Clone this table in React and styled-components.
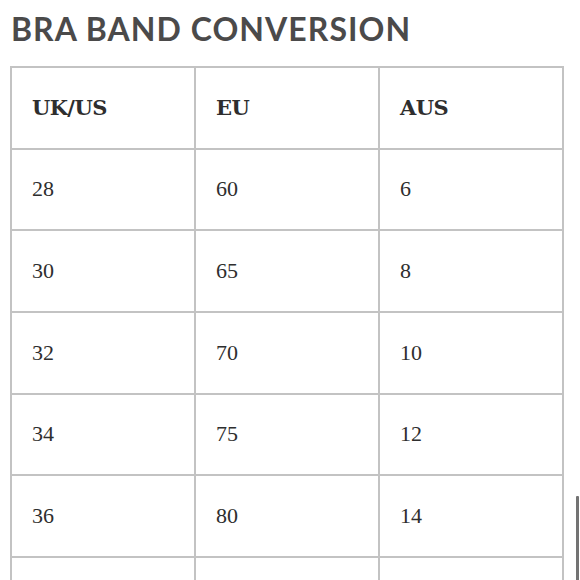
import styled, { createGlobalStyle } from "styled-components";

const GlobalStyle = createGlobalStyle`
  html, body {
    margin: 0;
    padding: 0;
    background: #fff;
    overflow: hidden;
  }
`

const Page = styled.div`
  width: 580px;
  height: 580px;
  overflow: hidden;
  position: relative;
  background: #fff;
`

const Title = styled.h1`
  margin: 0;
  padding: 9px 0 0 11px;
  height: 66px;
  box-sizing: border-box;
  font-family: "Lato", "Liberation Sans", sans-serif;
  font-weight: 700;
  font-size: 32px;
  line-height: 40px;
  letter-spacing: 1.05px;
  color: #4b4a4a;
`

const Table = styled.div`
  display: grid;
  grid-template-columns: repeat(3, 1fr);
  grid-auto-rows: 79.67px;
  gap: 2px;
  padding: 2px;
  margin-left: 10px;
  width: 554px;
  box-sizing: border-box;
  background: #c3c3c3;
`

const Cell = styled.div`
  background: #fff;
  display: flex;
  align-items: center;
  padding-left: 20px;
  font-family: ${(p) =>
    p.$head ? '"DejaVu Serif", serif' : '"Liberation Serif", "DejaVu Serif", serif'};
  font-weight: ${(p) => (p.$head ? 700 : 400)};
  font-size: ${(p) => (p.$head ? "21px" : "22px")};
  letter-spacing: ${(p) => (p.$head ? "-0.6px" : "0")};
  color: #2e2e2e;
  font-variant-numeric: oldstyle-nums;
`

const ScrollThumb = styled.div`
  position: absolute;
  right: 1px;
  top: 496px;
  width: 3px;
  height: 100px;
  background: #737373;
  border-radius: 1px;
`

const rows = [
  ["28", "60", "6"],
  ["30", "65", "8"],
  ["32", "70", "10"],
  ["34", "75", "12"],
  ["36", "80", "14"],
  ["", "", ""],
];

export default function App() {
  return (
    <Page>
      <GlobalStyle />
      <Title>BRA BAND CONVERSION</Title>
      <Table>
        {["UK/US", "EU", "AUS"].map((h) => (
          <Cell key={h} $head>
            {h}
          </Cell>
        ))}
        {rows.map((r, ri) =>
          r.map((v, i) => <Cell key={ri + "-" + i}>{v}</Cell>)
        )}
      </Table>
      <ScrollThumb />
    </Page>
  );
}
